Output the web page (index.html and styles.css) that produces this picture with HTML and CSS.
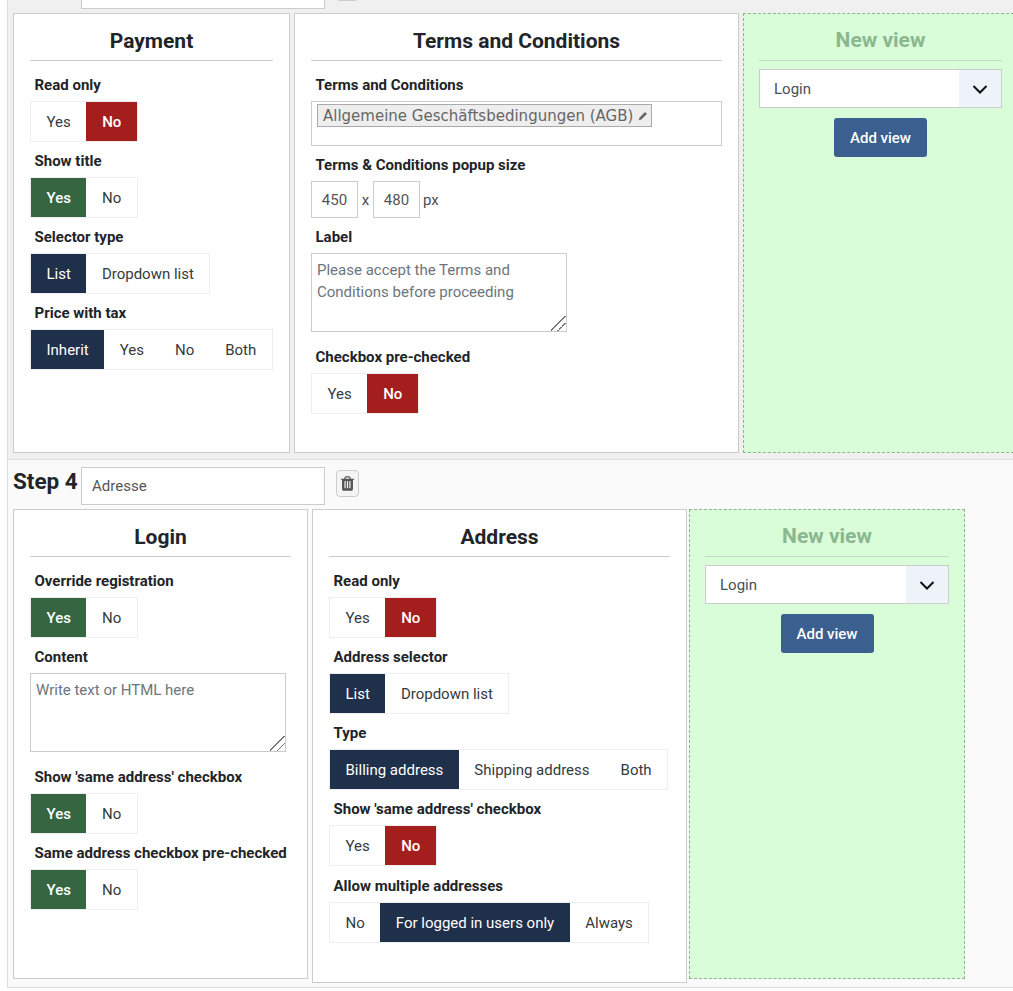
FILE: index.html
```html
<!DOCTYPE html>
<html lang="en">
<head>
    <meta charset="UTF-8">
    <meta name="viewport" content="width=device-width, initial-scale=1.0">
    <title>Checkout steps</title>
    <link rel="stylesheet" href="styles.css">
</head>
<body>

    <div class="steps">
        <!-- Previous step, scrolled mostly out of view -->
        <div class="step step-first">
            <div class="step-head step-head-cut">
                <input type="text" class="step-name step-name-offset">
                <button type="button" class="trash-btn" aria-label="Delete step">
                    <svg viewBox="0 0 1792 1792" class="trash-icon"><path d="M704 1376v-704q0-14-9-23t-23-9h-64q-14 0-23 9t-9 23v704q0 14 9 23t23 9h64q14 0 23-9t9-23zm256 0v-704q0-14-9-23t-23-9h-64q-14 0-23 9t-9 23v704q0 14 9 23t23 9h64q14 0 23-9t9-23zm256 0v-704q0-14-9-23t-23-9h-64q-14 0-23 9t-9 23v704q0 14 9 23t23 9h64q14 0 23-9t9-23zm-544-992h448l-48-117q-7-9-17-11h-317q-10 2-17 11zm928 32v64q0 14-9 23t-23 9h-96v948q0 83-47 143.5t-113 60.5h-832q-66 0-113-58.5t-47-141.5v-952h-96q-14 0-23-9t-9-23v-64q0-14 9-23t23-9h309l70-167q15-37 54-63t79-26h320q40 0 79 26t54 63l70 167h309q14 0 23 9t9 23z"/></svg>
                </button>
            </div>
            <div class="views">
                <div class="panel panel-payment">
                    <h3 class="panel-title">Payment</h3>
                    <label class="field-label">Read only</label>
                    <div class="toggle">
                        <span class="toggle-item">Yes</span>
                        <span class="toggle-item is-no">No</span>
                    </div>
                    <label class="field-label">Show title</label>
                    <div class="toggle">
                        <span class="toggle-item is-yes">Yes</span>
                        <span class="toggle-item">No</span>
                    </div>
                    <label class="field-label">Selector type</label>
                    <div class="toggle">
                        <span class="toggle-item is-option">List</span>
                        <span class="toggle-item">Dropdown list</span>
                    </div>
                    <label class="field-label">Price with tax</label>
                    <div class="toggle">
                        <span class="toggle-item is-option">Inherit</span>
                        <span class="toggle-item">Yes</span>
                        <span class="toggle-item">No</span>
                        <span class="toggle-item">Both</span>
                    </div>
                </div>

                <div class="panel panel-terms">
                    <h3 class="panel-title">Terms and Conditions</h3>
                    <label class="field-label">Terms and Conditions</label>
                    <div class="chip-box">
                        <span class="chip">Allgemeine Geschäftsbedingungen (AGB)
                            <svg viewBox="0 0 12 12" class="chip-edit"><path d="M1 11l.7-3L8.400 1.300l2.300 2.300L4 10.300z"/></svg>
                        </span>
                    </div>
                    <label class="field-label">Terms &amp; Conditions popup size</label>
                    <div class="size-row">
                        <input type="text" class="size-input" value="450">
                        <span class="size-sep">x</span>
                        <input type="text" class="size-input" value="480">
                        <span class="size-unit">px</span>
                    </div>
                    <label class="field-label">Label</label>
                    <textarea class="text-box">Please accept the Terms and Conditions before proceeding</textarea>
                    <label class="field-label field-label-gap">Checkbox pre-checked</label>
                    <div class="toggle">
                        <span class="toggle-item">Yes</span>
                        <span class="toggle-item is-no">No</span>
                    </div>
                </div>

                <div class="panel panel-new">
                    <h3 class="panel-title">New view</h3>
                    <div class="view-select">
                        <select class="view-select-input">
                            <option>Login</option>
                        </select>
                        <span class="view-select-arrow">
                            <svg viewBox="0 0 16 16" class="chevron"><path d="M1.500 5l6.500 6.500L14.500 5"/></svg>
                        </span>
                    </div>
                    <button type="button" class="add-btn">Add view</button>
                </div>
            </div>
        </div>

        <!-- Step 4 -->
        <div class="step step-second">
            <div class="step-head">
                <h2 class="step-title">Step 4</h2>
                <input type="text" class="step-name" value="Adresse">
                <button type="button" class="trash-btn" aria-label="Delete step">
                    <svg viewBox="0 0 1792 1792" class="trash-icon"><path d="M704 1376v-704q0-14-9-23t-23-9h-64q-14 0-23 9t-9 23v704q0 14 9 23t23 9h64q14 0 23-9t9-23zm256 0v-704q0-14-9-23t-23-9h-64q-14 0-23 9t-9 23v704q0 14 9 23t23 9h64q14 0 23-9t9-23zm256 0v-704q0-14-9-23t-23-9h-64q-14 0-23 9t-9 23v704q0 14 9 23t23 9h64q14 0 23-9t9-23zm-544-992h448l-48-117q-7-9-17-11h-317q-10 2-17 11zm928 32v64q0 14-9 23t-23 9h-96v948q0 83-47 143.5t-113 60.5h-832q-66 0-113-58.5t-47-141.5v-952h-96q-14 0-23-9t-9-23v-64q0-14 9-23t23-9h309l70-167q15-37 54-63t79-26h320q40 0 79 26t54 63l70 167h309q14 0 23 9t9 23z"/></svg>
                </button>
            </div>
            <div class="views">
                <div class="panel panel-login">
                    <h3 class="panel-title">Login</h3>
                    <label class="field-label">Override registration</label>
                    <div class="toggle">
                        <span class="toggle-item is-yes">Yes</span>
                        <span class="toggle-item">No</span>
                    </div>
                    <label class="field-label">Content</label>
                    <textarea class="text-box" placeholder="Write text or HTML here"></textarea>
                    <label class="field-label field-label-gap">Show 'same address' checkbox</label>
                    <div class="toggle">
                        <span class="toggle-item is-yes">Yes</span>
                        <span class="toggle-item">No</span>
                    </div>
                    <label class="field-label">Same address checkbox pre-checked</label>
                    <div class="toggle">
                        <span class="toggle-item is-yes">Yes</span>
                        <span class="toggle-item">No</span>
                    </div>
                </div>

                <div class="panel panel-address">
                    <h3 class="panel-title">Address</h3>
                    <label class="field-label">Read only</label>
                    <div class="toggle">
                        <span class="toggle-item">Yes</span>
                        <span class="toggle-item is-no">No</span>
                    </div>
                    <label class="field-label">Address selector</label>
                    <div class="toggle">
                        <span class="toggle-item is-option">List</span>
                        <span class="toggle-item">Dropdown list</span>
                    </div>
                    <label class="field-label">Type</label>
                    <div class="toggle">
                        <span class="toggle-item is-option">Billing address</span>
                        <span class="toggle-item">Shipping address</span>
                        <span class="toggle-item">Both</span>
                    </div>
                    <label class="field-label">Show 'same address' checkbox</label>
                    <div class="toggle">
                        <span class="toggle-item">Yes</span>
                        <span class="toggle-item is-no">No</span>
                    </div>
                    <label class="field-label field-label-low">Allow multiple addresses</label>
                    <div class="toggle">
                        <span class="toggle-item">No</span>
                        <span class="toggle-item is-option">For logged in users only</span>
                        <span class="toggle-item">Always</span>
                    </div>
                </div>

                <div class="panel panel-new panel-new-tight">
                    <h3 class="panel-title">New view</h3>
                    <div class="view-select">
                        <select class="view-select-input">
                            <option>Login</option>
                        </select>
                        <span class="view-select-arrow">
                            <svg viewBox="0 0 16 16" class="chevron"><path d="M1.500 5l6.500 6.500L14.500 5"/></svg>
                        </span>
                    </div>
                    <button type="button" class="add-btn">Add view</button>
                </div>
            </div>
        </div>
    </div>

</body>
</html>
```

FILE: styles.css
```css
* {
    box-sizing: border-box;
}

body {
    margin: 0;
    font-family: Roboto, "Liberation Sans", sans-serif;
    font-size: 15px;
    color: #212529;
    background-color: #fff;
    overflow-x: hidden;
}

.steps {
    margin-left: 7px;
    border-left: 1px solid #ddd;
}

.step {
    padding: 7px 0 4px 5px;
    border-bottom: 1px solid #ddd;
}

.step-first {
    padding-top: 0;
    padding-bottom: 6px;
    background-color: #f0f0f0;
}

.step-second {
    background-color: #fafafa;
}

.step-head {
    display: flex;
    align-items: flex-end;
    height: 38px;
    margin-bottom: 4px;
}

.step-head-cut {
    height: 9px;
    overflow: hidden;
}

.step-title {
    width: 68px;
    margin: 0 0 10px;
    flex-shrink: 0;
    font-size: 22.500px;
    line-height: 28px;
    font-weight: 700;
    white-space: nowrap;
}

.step-name {
    width: 244px;
    height: 38px;
    flex-shrink: 0;
    padding: 0 10px;
    border: 1px solid #ccc;
    background: #fff;
    font-family: inherit;
    font-size: 15px;
    color: #555;
}

.step-name-offset {
    margin-left: 68px;
}

.trash-btn {
    width: 23px;
    height: 27px;
    flex-shrink: 0;
    margin: 0 0 8px 11px;
    padding: 0;
    display: flex;
    align-items: center;
    justify-content: center;
    border: 1px solid #ccc;
    border-radius: 4px;
    background: #f5f5f5;
}

.trash-icon {
    width: 17px;
    height: 17px;
    fill: #555;
}

.views {
    display: flex;
    align-items: flex-start;
}

.panel {
    flex-shrink: 0;
    min-height: 440px;
    padding: 16px;
    border: 1px solid #ccc;
    background: #fff;
}

.panel-payment {
    width: 277px;
    margin-right: 4px;
}

.panel-terms {
    width: 445px;
    margin-right: 4px;
}

.panel-login {
    width: 295px;
    min-height: 470px;
    margin-right: 4px;
}

.panel-address {
    width: 375px;
    min-height: 474px;
    margin-right: 2px;
}

.panel-new {
    width: 276px;
    display: flex;
    flex-direction: column;
    padding-left: 15px;
    border: 1px dashed #8fb58f;
    background: #d9fdd9;
}

.panel-new-tight {
    min-height: 470px;
    padding-right: 15px;
}

.panel-title {
    margin: 0 0 5px;
    height: 31px;
    border-bottom: 1px solid #ccc;
    text-align: center;
    font-size: 21px;
    line-height: 22px;
    font-weight: 700;
}

.panel-new .panel-title {
    margin-bottom: 8px;
    line-height: 20px;
    color: #8ab78f;
    border-bottom-color: #c2d8c4;
}

.field-label {
    display: block;
    padding: 9px 0 5px 4.500px;
    font-size: 15px;
    line-height: 21px;
    font-weight: 700;
}

.field-label-gap {
    margin-top: 6px;
}

.field-label-low {
    margin-top: 1px;
}

.toggle {
    display: inline-flex;
    height: 41px;
    vertical-align: top;
    border: 1px solid #eee;
    background: #fff;
}

.toggle-item {
    display: flex;
    align-items: center;
    justify-content: center;
    padding: 0 15.500px;
    font-size: 15px;
    color: #343a40;
    white-space: nowrap;
}

.is-no {
    min-width: 51px;
    background-color: #a41e1e;
    color: #fff;
    font-weight: 500;
}

.is-yes {
    background-color: #366542;
    color: #fff;
    font-weight: 500;
}

.is-option {
    min-width: 55px;
    background-color: #1f304a;
    color: #fff;
}

.chip-box {
    height: 45px;
    padding: 2px 5px;
    border: 1px solid #ccc;
}

.chip {
    display: inline-flex;
    align-items: center;
    gap: 5px;
    height: 23px;
    padding: 1px 3px 0 5px;
    border: 1px solid #aaa;
    background: #eee;
    font-family: "DejaVu Sans", sans-serif;
    font-size: 15px;
    color: #666;
    white-space: nowrap;
}

.chip-edit {
    width: 10px;
    height: 10px;
    fill: #666;
}

.size-row {
    display: flex;
    align-items: center;
    height: 37px;
}

.size-input {
    width: 47px;
    height: 37px;
    padding: 0;
    border: 1px solid #ccc;
    text-align: center;
    font-family: inherit;
    font-size: 15px;
    color: #555;
}

.size-sep {
    width: 15px;
    text-align: center;
    color: #495057;
}

.size-unit {
    margin-left: 3px;
    color: #495057;
}

.text-box {
    display: block;
    width: 256px;
    height: 79px;
    padding: 5px;
    border: 1px solid #ccc;
    font-family: inherit;
    font-size: 15px;
    line-height: 22px;
    color: #6c757d;
}

.text-box::placeholder {
    color: #6c757d;
}

.text-box::-webkit-resizer {
    background: linear-gradient(135deg, transparent 46%, #777 46%, #777 52%, transparent 52%, transparent 70%, #777 70%, #777 76%, transparent 76%);
}

.view-select {
    display: flex;
    height: 39px;
    border: 1px solid #ccc;
}

.view-select-input {
    flex: 1;
    min-width: 0;
    padding: 0 14px;
    border: none;
    border-radius: 0;
    appearance: none;
    background: #fff;
    font-family: inherit;
    font-size: 15px;
    color: #495057;
}

.view-select-arrow {
    width: 42px;
    display: flex;
    align-items: center;
    justify-content: center;
    background: #eef2f9;
}

.chevron {
    width: 16px;
    height: 16px;
    fill: none;
    stroke: #111;
    stroke-width: 2;
}

.add-btn {
    align-self: center;
    width: 93px;
    height: 39px;
    margin-top: 10px;
    border: none;
    border-radius: 3px;
    background-color: #3b5f8f;
    color: #fff;
    font-family: inherit;
    font-size: 15px;
    font-weight: 500;
}
```
